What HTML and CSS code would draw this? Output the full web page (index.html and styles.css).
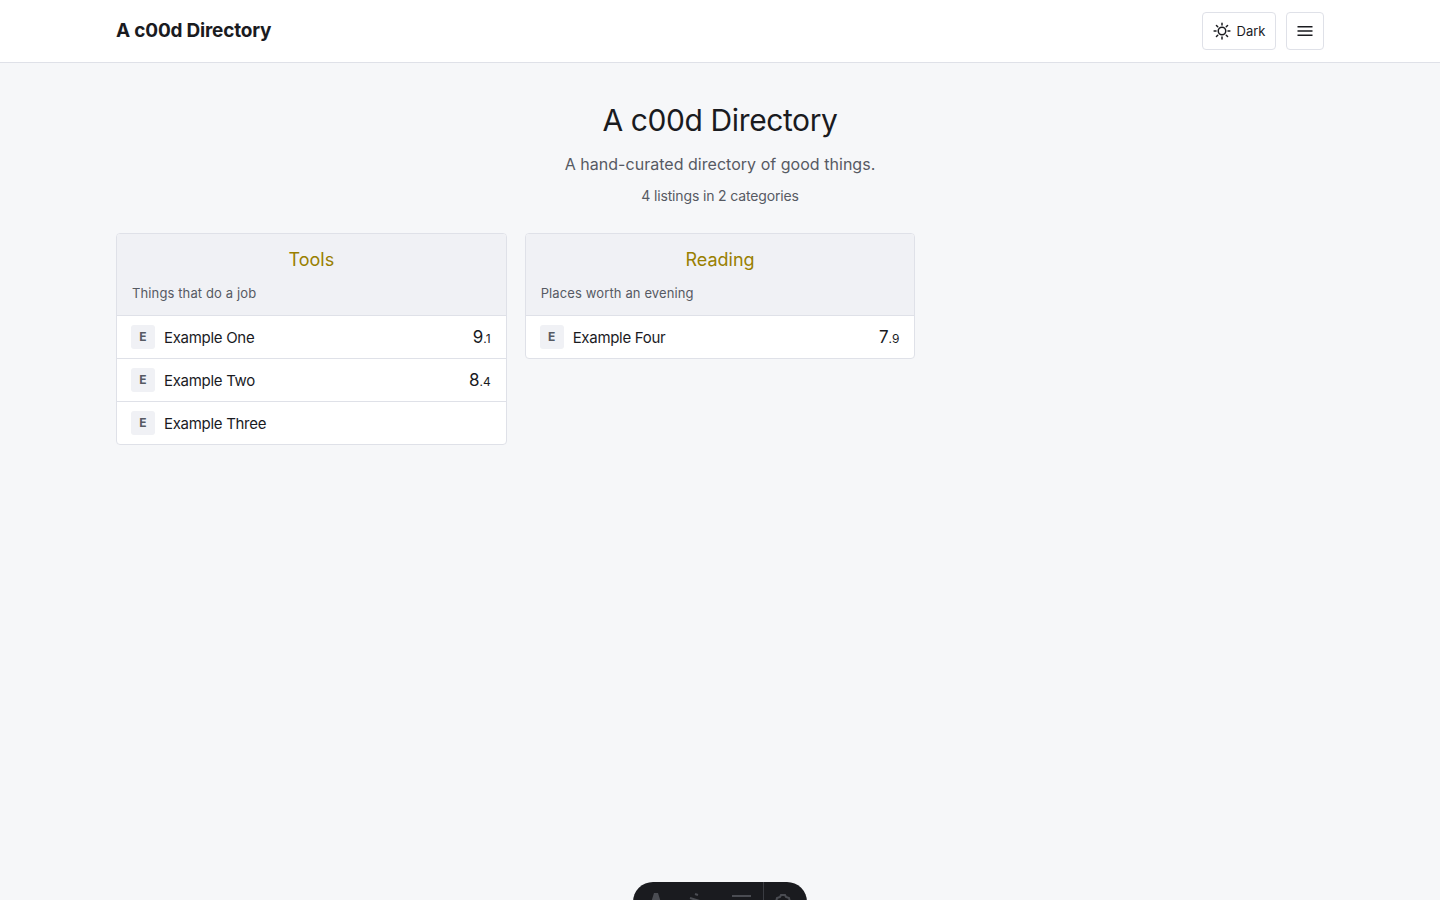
FILE: index.html
```html
<!DOCTYPE html>
<html lang="en">
<head>
<meta charset="utf-8">
<title>A c00d Directory</title>
<link rel="stylesheet" href="styles.css">
</head>
<body>
<header class="nav">
  <div class="nav-inner">
    <a class="brand" href="#">A c00d Directory</a>
    <div class="nav-actions">
      <button class="btn theme-btn">
        <svg class="sun" width="18" height="18" viewBox="0 0 24 24" fill="none" stroke="currentColor" stroke-width="2" stroke-linecap="round"><circle cx="12" cy="12" r="5"/><path d="M12 1.5v2.5M12 20v2.5M1.5 12H4M20 12h2.500M4.600 4.600l1.700 1.700M17.700 17.700l1.700 1.700M4.600 19.400l1.700-1.700M17.700 6.300l1.700-1.700"/></svg>
        <span>Dark</span>
      </button>
      <button class="btn menu-btn" aria-label="Menu">
        <svg width="18" height="18" viewBox="0 0 18 18" fill="none" stroke="currentColor" stroke-width="1.500"><path d="M1.500 4.750h15M1.500 9h15M1.500 13.250h15"/></svg>
      </button>
    </div>
  </div>
</header>
<main class="page">
  <section class="hero">
    <h1>A c00d Directory</h1>
    <p class="lead">A hand-curated directory of good things.</p>
    <p class="count">4 listings in 2 categories</p>
  </section>
  <section class="grid">
    <article class="card">
      <div class="card-head">
        <h2>Tools</h2>
        <p>Things that do a job</p>
      </div>
      <div class="row"><span class="badge">E</span><span class="name">Example One</span><span class="score">9<small>.1</small></span></div>
      <div class="row"><span class="badge">E</span><span class="name">Example Two</span><span class="score">8<small>.4</small></span></div>
      <div class="row"><span class="badge">E</span><span class="name">Example Three</span></div>
    </article>
    <article class="card">
      <div class="card-head">
        <h2>Reading</h2>
        <p>Places worth an evening</p>
      </div>
      <div class="row"><span class="badge">E</span><span class="name">Example Four</span><span class="score">7<small>.9</small></span></div>
    </article>
  </section>
</main>
<div class="dock">
  <svg class="dock-a" width="16" height="16" viewBox="0 0 16 16" fill="currentColor"><path d="M6 0h4l5 16H1z"/></svg>
  <svg class="dock-b" width="20" height="16" viewBox="0 0 20 16" fill="none" stroke="currentColor" stroke-width="2"><path d="M1 5l16 5M6 1l3 1"/></svg>
  <svg class="dock-c" width="20" height="16" viewBox="0 0 20 16" fill="none" stroke="currentColor" stroke-width="2"><path d="M0 3h19"/></svg>
  <span class="dock-sep"></span>
  <svg class="dock-d" width="18" height="18" viewBox="0 0 18 18" fill="none" stroke="currentColor" stroke-width="2"><path d="M6 4l1-2h4l1 2 3 1 1 4H2l1-4z"/></svg>
</div>
</body>
</html>
```

FILE: styles.css
```css
* { box-sizing: border-box; }
html, body { height: 100%; }
body {
  margin: 0;
  background: #f6f7f9;
  color: #1a1b1f;
  font-family: Inter, "Liberation Sans", sans-serif;
  overflow: hidden;
}
.nav {
  height: 63px;
  background: #fff;
  border-bottom: 1px solid #dfe1e8;
}
.nav-inner {
  width: 1208px;
  height: 62px;
  margin: 0 auto;
  display: flex;
  align-items: center;
  justify-content: space-between;
}
.brand {
  font-size: 19px;
  line-height: 24px;
  margin-top: -1px;
  font-weight: 700;
  color: #1a1b1f;
  text-decoration: none;
  letter-spacing: -0.2px;
}
.nav-actions { display: flex; gap: 10px; }
.btn {
  height: 38px;
  display: flex;
  align-items: center;
  justify-content: center;
  background: #fff;
  border: 1px solid #dfe1e8;
  border-radius: 4px;
  color: #1a1b1f;
  font: 400 13px Inter, "Liberation Sans", sans-serif;
  padding: 0;
}
.theme-btn { width: 74px; gap: 6px; }
.menu-btn { width: 38px; }
.page { width: 1208px; margin: 0 auto; }
.hero { text-align: center; padding-top: 36px; }
.hero h1 {
  margin: 0;
  font-size: 30px;
  line-height: 42px;
  font-weight: 400;
  letter-spacing: -0.4px;
}
.lead {
  margin: 11px 0 0;
  font-size: 16px;
  line-height: 24px;
  letter-spacing: 0.03px;
  color: #565a63;
}
.count {
  margin: 10px 0 0;
  font-size: 14px;
  line-height: 20px;
  letter-spacing: -0.15px;
  color: #565a63;
}
.grid {
  margin-top: 27px;
  display: grid;
  grid-template-columns: repeat(3, 1fr);
  gap: 18px;
  align-items: start;
}
.card {
  background: #fff;
  border: 1px solid #dfe1e8;
  border-radius: 4px;
  overflow: hidden;
}
.card-head {
  height: 81px;
  background: #f0f1f5;
  padding: 13px 15px 0;
}
.card-head h2 {
  margin: 0;
  text-align: center;
  font-size: 18px;
  line-height: 26px;
  font-weight: 400;
  color: #997f00;
}
.card-head p {
  margin: 10px 0 0;
  font-size: 13px;
  line-height: 20px;
  letter-spacing: 0.12px;
  color: #565a63;
}
.row {
  height: 43px;
  border-top: 1px solid #dfe1e8;
  display: flex;
  align-items: center;
  padding: 0 14px;
  gap: 9px;
  font-size: 15px;
  letter-spacing: -0.3px;
}
.badge {
  width: 24px;
  height: 24px;
  border-radius: 3px;
  background: #f0f1f5;
  color: #565a63;
  font-size: 12px;
  font-weight: 700;
  letter-spacing: 0;
  display: flex;
  align-items: center;
  justify-content: center;
  margin-top: -1px;
}
.name { flex: 1; }
.score { font-size: 17px; letter-spacing: 0; margin-right: 1px; }
.score small { font-size: 12px; }
.dock {
  position: fixed;
  left: 633px;
  top: 882px;
  width: 174px;
  height: 44px;
  background: #1a1b1f;
  border-radius: 20px;
  color: #4a4c52;
}
.dock svg { position: absolute; top: 11px; filter: blur(0.5px); }
.dock-a { left: 15px; }
.dock-b { left: 56px; }
.dock-c { left: 99px; }
.dock-d { left: 141px; }
.dock-sep {
  position: absolute;
  left: 130px;
  top: 0;
  width: 1px;
  height: 44px;
  background: #3a3c42;
}
```
